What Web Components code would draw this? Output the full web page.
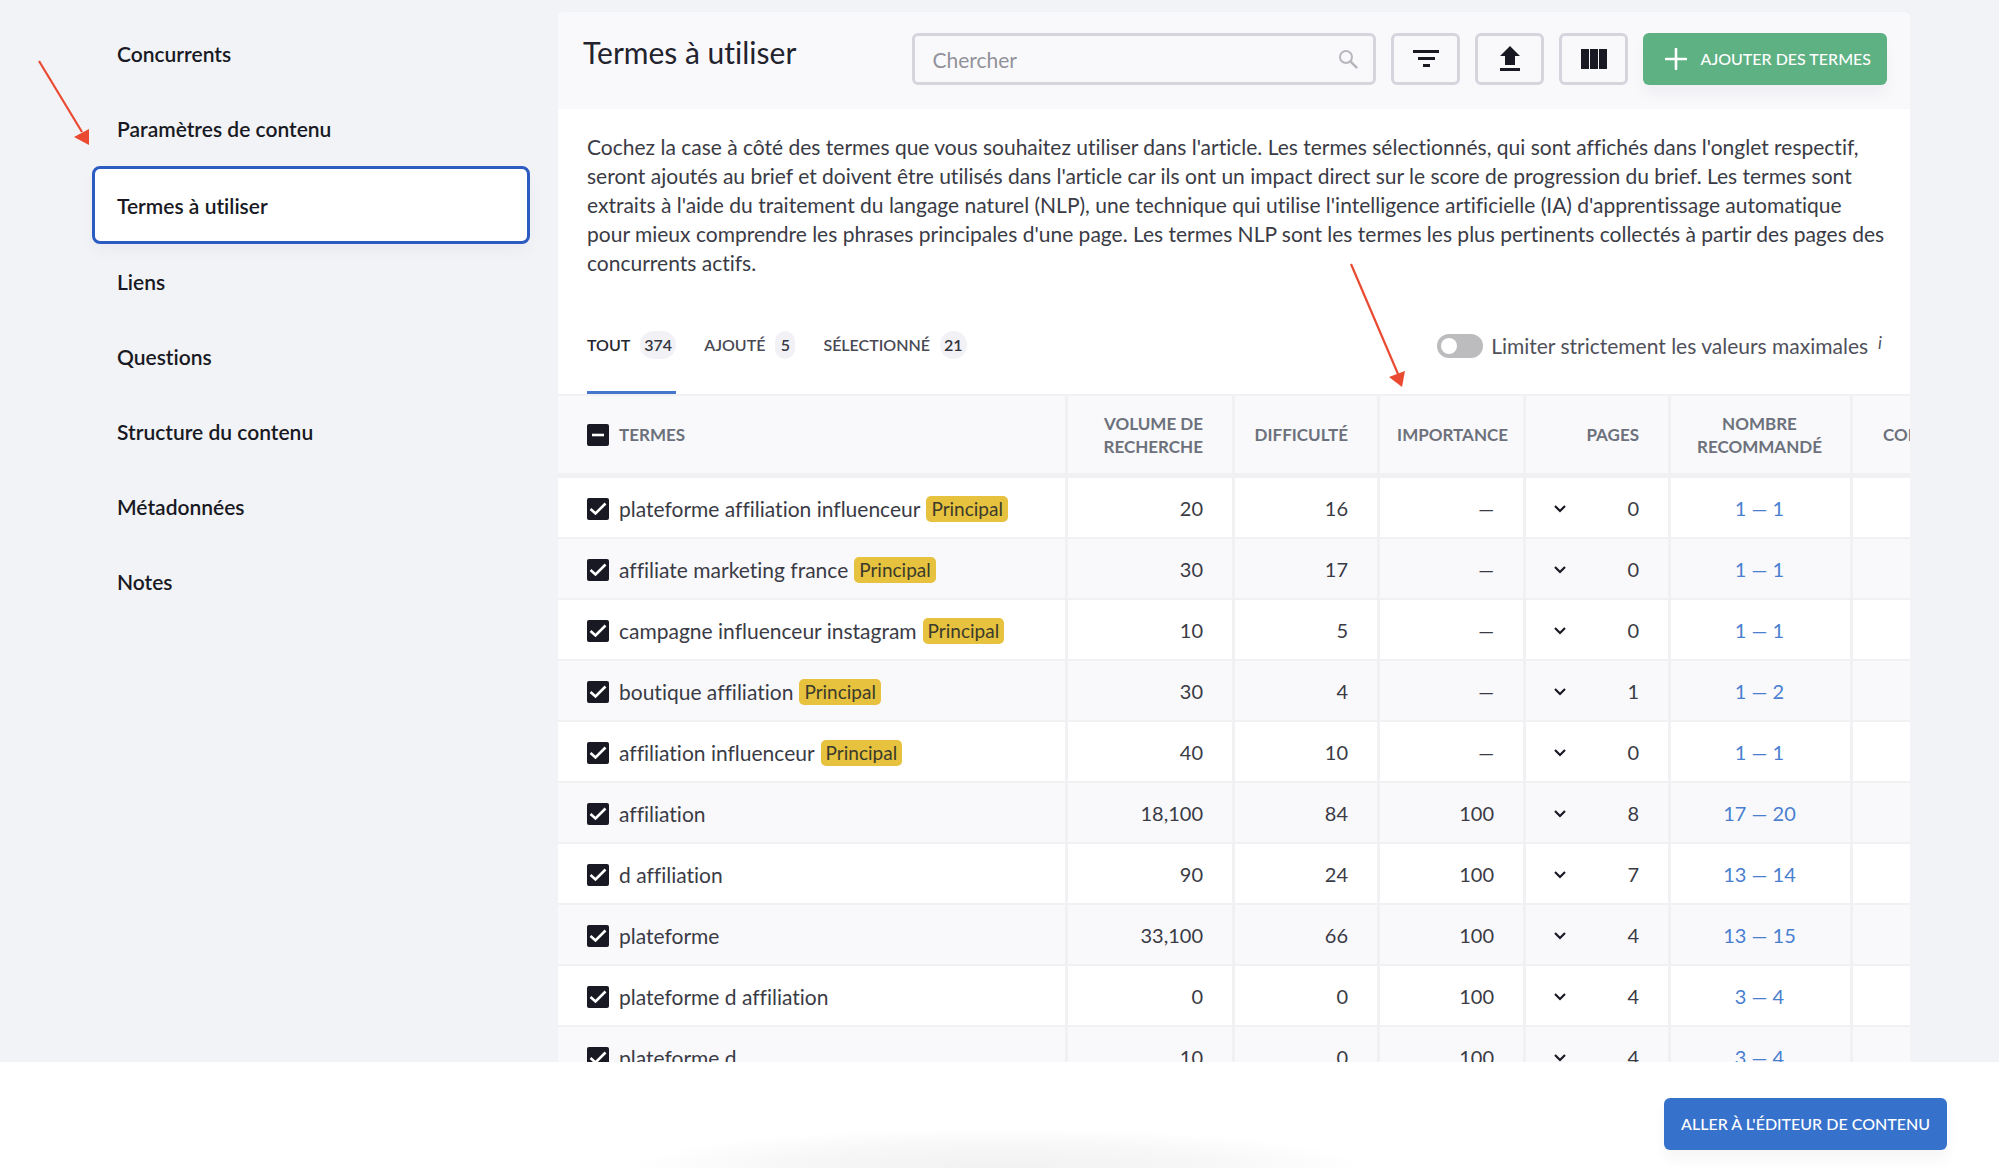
<!DOCTYPE html>
<html lang="fr">
<head>
<meta charset="utf-8">
<meta name="viewport" content="width=device-width, initial-scale=1">
<title>Termes à utiliser</title>
<style>
  html, body { height: 100%; margin: 0; }
  body {
    font: 400 21px/29px Lato, "Noto Sans", sans-serif;
    font-variant-ligatures: none;
    color: #3a3b45;
    background: #f2f3f6;
    overflow: hidden;
    --ink: #181923;
    --line: #f1f1f4;
    --soft: #f9f9fc;
    --edge: #d6d5dd;
    --blue: #3671cc;
  }
</style>
</head>
<body>
<brief-app></brief-app>

<script>
const define = (name, html, setup) => {
  const template = document.createElement('template');
  template.innerHTML = html;
  customElements.define(name, class extends HTMLElement {
    constructor() {
      super();
      this.attachShadow({ mode: 'open' }).append(template.content.cloneNode(true));
    }
    connectedCallback() { if (setup) setup(this, this.shadowRoot); }
  });
};

/* Sidebar entry */
define('nav-item', `
<style>
  :host { display: block; }
  a {
    display: flex; align-items: center; box-sizing: border-box;
    height: 75px; padding: 0 25px;
    color: var(--ink); font-weight: 600; text-decoration: none;
  }
  :host([active]) a {
    height: 78px; padding: 0 22px;
    background: #fff; border: 3px solid #2c5cc2; border-radius: 8px;
    box-shadow: 0 8px 16px rgba(40, 40, 90, .03);
  }
</style>
<a href="#"><slot></slot></a>`,
(host, root) => { if (host.hasAttribute('active')) root.querySelector('a').setAttribute('aria-current', 'page'); });

define('side-nav', `
<style>
  :host { display: block; }
  nav { padding-top: 16px; }
</style>
<nav aria-label="Sections">
  <nav-item>Concurrents</nav-item>
  <nav-item>Paramètres de contenu</nav-item>
  <nav-item active>Termes à utiliser</nav-item>
  <nav-item>Liens</nav-item>
  <nav-item>Questions</nav-item>
  <nav-item>Structure du contenu</nav-item>
  <nav-item>Métadonnées</nav-item>
  <nav-item>Notes</nav-item>
</nav>`);

/* Square outlined tool button */
define('icon-button', `
<style>
  :host { display: block; }
  button {
    display: grid; place-items: center; box-sizing: border-box;
    width: 69px; height: 52px; padding: 0;
    border: 3px solid var(--edge); border-radius: 6px;
    background: var(--soft); color: var(--ink);
  }
</style>
<button type="button"><slot></slot></button>`,
(host, root) => root.querySelector('button').setAttribute('aria-label', host.getAttribute('label')));

/* Filled action button */
define('action-button', `
<style>
  :host { display: block; }
  button {
    display: flex; align-items: center; justify-content: center; gap: 13px; box-sizing: border-box;
    height: 52px; padding: var(--pad, 0 17px);
    border: 0; border-radius: 6px;
    background: var(--fill, var(--blue)); color: #fff;
    font: 500 16px/20px Lato, "Noto Sans", sans-serif; white-space: nowrap;
    box-shadow: 0 10px 14px rgba(30, 30, 60, .04);
  }
</style>
<button type="button"><slot name="icon"></slot><slot></slot></button>`);

define('search-box', `
<style>
  :host { display: block; }
  label {
    display: flex; align-items: center; box-sizing: border-box;
    height: 52px; padding: 0 15px 0 17px;
    border: 3px solid var(--edge); border-radius: 6px; background: var(--soft);
  }
  input {
    flex: 1; min-width: 0; padding: 0; border: 0; outline: 0; background: none;
    font: inherit; color: var(--ink);
  }
  input::placeholder { color: #92929a; opacity: 1; }
</style>
<label>
  <input type="text" placeholder="Chercher" aria-label="Chercher">
  <svg width="20" height="20" viewBox="0 0 20 20" fill="none" stroke="#b7b7bd" stroke-width="2" stroke-linecap="round"><circle cx="8" cy="8" r="6"/><path d="M12.4 12.4l6 6" stroke-width="2.6"/></svg>
</label>`);

define('panel-header', `
<style>
  :host {
    display: flex; justify-content: space-between; align-items: flex-start; gap: 24px;
    padding: 21px 23px 24px 25px; background: var(--soft); border-radius: 6px 6px 0 0;
  }
  h1 { margin: 0; font-size: 30px; line-height: 38px; font-weight: 400; color: #22232d; white-space: nowrap; }
  .tools { display: flex; gap: 15px; }
  search-box { width: 464px; }
  action-button { --fill: #5eb182; --pad: 0 16px 0 22px; }
</style>
<h1>Termes à utiliser</h1>
<div class="tools">
  <search-box></search-box>
  <icon-button label="Filtrer"><svg width="28" height="22" viewBox="0 0 28 22" fill="currentColor"><path d="M1 2h26v3H1zM6 9h17v3H6zM11 16h7v3h-7z"/></svg></icon-button>
  <icon-button label="Exporter"><svg width="22" height="26" viewBox="0 0 22 26" fill="currentColor"><path d="M11 0L21 10h-5v9H6v-9H1zM1 22h20v3H1z"/></svg></icon-button>
  <icon-button label="Colonnes"><svg width="26" height="20" viewBox="0 0 26 20" fill="currentColor"><path d="M0 0h8v20H0zM9 0h8v20H9zM18 0h8v20h-8z"/></svg></icon-button>
  <action-button><svg slot="icon" width="22" height="22" viewBox="0 0 22 22" stroke="#fff" stroke-width="2.6" stroke-linecap="round"><path d="M11 1v20M1 11h20"/></svg>AJOUTER DES TERMES</action-button>
</div>`);

/* Tab with a round counter */
define('count-tab', `
<style>
  :host { display: block; }
  button {
    display: flex; align-items: center; gap: 10px; height: 73px; padding: 0 0 22px;
    border: 0; border-bottom: 3px solid transparent; background: none;
    color: #484954; font: 600 16px/20px Lato, "Noto Sans", sans-serif;
  }
  :host([selected]) button { color: #23242e; border-bottom-color: #4577cc; }
  .count {
    box-sizing: border-box; min-width: 20px; height: 28px; padding: 0 4px;
    border-radius: 14px; background: #f2f2f6; line-height: 28px; text-align: center; color: #34353f;
  }
</style>
<button type="button" role="tab"><slot></slot><span class="count"></span></button>`,
(host, root) => {
  root.querySelector('.count').textContent = host.getAttribute('count');
  root.querySelector('button').setAttribute('aria-selected', host.hasAttribute('selected'));
});

define('limit-switch', `
<style>
  :host { display: block; }
  label { display: flex; align-items: center; gap: 8px; color: #4f505a; white-space: nowrap; }
  input {
    appearance: none; display: flex; align-items: center; box-sizing: border-box;
    width: 46px; height: 24px; margin: 0; padding: 4px; border-radius: 12px; background: #bcbcbe;
  }
  input::before { content: ""; width: 16px; height: 16px; border-radius: 50%; background: #fff; }
  input:checked { justify-content: flex-end; background: var(--blue); }
  i { font-size: 17px; line-height: 23px; align-self: flex-start; padding-left: 2px; }
</style>
<label><input type="checkbox" role="switch">Limiter strictement les valeurs maximales<i>i</i></label>`);

define('tab-bar', `
<style>
  :host { display: flex; justify-content: space-between; align-items: flex-start; padding: 0 28px 0 29px; }
  .tabs { display: flex; gap: 28px; }
  limit-switch { padding-top: 10px; }
</style>
<div class="tabs" role="tablist">
  <count-tab selected count="374">TOUT</count-tab>
  <count-tab count="5">AJOUTÉ</count-tab>
  <count-tab count="21">SÉLECTIONNÉ</count-tab>
</div>
<limit-switch></limit-switch>`);

/* Dark tick box */
define('tick-box', `
<style>
  :host { display: inline-grid; width: 22px; height: 22px; }
  input, svg { grid-area: 1 / 1; }
  input { appearance: none; width: 22px; height: 22px; margin: 0; border-radius: 2px; background: var(--ink); }
  svg { pointer-events: none; }
  .dash { display: none; }
  :host([mixed]) .dash { display: inline; }
  :host([mixed]) .tick { display: none; }
</style>
<input type="checkbox" checked>
<svg width="22" height="22" viewBox="0 0 22 22" fill="none" stroke="#fff" stroke-width="2.6"><path class="tick" d="M3.5 11L8.5 15.5L18.5 5.5"/><path class="dash" d="M5 11h12"/></svg>`,
(host, root) => {
  const box = root.querySelector('input');
  box.indeterminate = host.hasAttribute('mixed');
  box.setAttribute('aria-label', host.getAttribute('label'));
});

const TERMS = [
  ['plateforme affiliation influenceur', true, '20', '16', '—', '0', '1 — 1'],
  ['affiliate marketing france', true, '30', '17', '—', '0', '1 — 1'],
  ['campagne influenceur instagram', true, '10', '5', '—', '0', '1 — 1'],
  ['boutique affiliation', true, '30', '4', '—', '1', '1 — 2'],
  ['affiliation influenceur', true, '40', '10', '—', '0', '1 — 1'],
  ['affiliation', false, '18,100', '84', '100', '8', '17 — 20'],
  ['d affiliation', false, '90', '24', '100', '7', '13 — 14'],
  ['plateforme', false, '33,100', '66', '100', '4', '13 — 15'],
  ['plateforme d affiliation', false, '0', '0', '100', '4', '3 — 4'],
  ['plateforme d', false, '10', '0', '100', '4', '3 — 4'],
];

define('terms-table', `
<style>
  :host { display: block; overflow: hidden; }
  table { width: 100%; min-width: 1530px; table-layout: fixed; border-collapse: separate; border-spacing: 0; }
  th, td { box-sizing: border-box; padding: 0 29px 0 28px; border-right: 3px solid var(--line); text-align: right; }
  th {
    height: 84px; padding-left: 15px; background: var(--soft); border-top: 2px solid var(--line); border-bottom: 5px solid var(--line);
    color: #6c717b; font-size: 17px; line-height: 23px; font-weight: 700;
  }
  td { height: 61px; padding-top: 2px; border-bottom: 2px solid var(--line); background: #fff; font-size: 20px; }
  tr:nth-child(even) td { background: var(--soft); }
  th:first-child, td:first-child { text-align: left; padding-left: 29px; }
  th:nth-child(4) { padding: 0 15px; }
  th:nth-child(6), td:nth-child(6) { text-align: center; padding-left: 20px; padding-right: 22px; }
  th:last-child { text-align: left; padding-left: 30px; }
  .term { display: flex; align-items: center; gap: 10px; font-size: 21px; }
  th .term { font-size: 17px; }
  .main { margin-left: -4px; padding: 0 5px; border-radius: 5px; background: #e6c23e; color: #3b3a2c; font-size: 19px; line-height: 26px; }
  .pages { display: flex; align-items: center; justify-content: space-between; }
  button { padding: 0; border: 0; background: none; font: inherit; color: inherit; }
  .pages button { display: grid; color: var(--ink); }
  a { color: #4a7fd0; text-decoration: none; }
</style>
<table>
  <colgroup><col style="width:510px"><col style="width:167px"><col style="width:145px"><col style="width:146px"><col style="width:145px"><col style="width:182px"><col></colgroup>
  <thead><tr>
    <th><div class="term"><tick-box mixed label="Tout sélectionner"></tick-box>TERMES</div></th>
    <th>VOLUME DE RECHERCHE</th><th>DIFFICULTÉ</th><th>IMPORTANCE</th><th>PAGES</th><th>NOMBRE RECOMMANDÉ</th><th>COMPÉTITION</th>
  </tr></thead>
  <tbody></tbody>
</table>`,
(host, root) => {
  root.querySelector('tbody').innerHTML = TERMS.map(([term, main, volume, difficulty, importance, pages, range]) => `
    <tr>
      <td><div class="term"><tick-box label="${term}"></tick-box>${term}${main ? '<span class="main">Principal</span>' : ''}</div></td>
      <td>${volume}</td><td>${difficulty}</td><td>${importance}</td>
      <td><div class="pages"><button type="button" aria-label="Afficher les pages"><svg width="12" height="10" viewBox="0 0 12 10" fill="none" stroke="currentColor" stroke-width="2.2"><path d="M1 2l5 5 5-5"/></svg></button>${pages}</div></td>
      <td><a href="#">${range}</a></td><td></td>
    </tr>`).join('');
});

define('terms-panel', `
<style>
  :host { display: block; min-width: 0; background: #fff; border-radius: 6px 6px 0 0; }
  p { margin: 0; padding: 23px 22px 0 29px; }
  tab-bar { padding-top: 44px; }
</style>
<panel-header></panel-header>
<p>Cochez la case à côté des termes que vous souhaitez utiliser dans l'article. Les termes sélectionnés, qui sont affichés dans l'onglet respectif, seront ajoutés au brief et doivent être utilisés dans l'article car ils ont un impact direct sur le score de progression du brief. Les termes sont extraits à l'aide du traitement du langage naturel (NLP), une technique qui utilise l'intelligence artificielle (IA) d'apprentissage automatique pour mieux comprendre les phrases principales d'une page. Les termes NLP sont les termes les plus pertinents collectés à partir des pages des concurrents actifs.</p>
<tab-bar></tab-bar>
<terms-table></terms-table>`);

define('page-footer', `
<style>
  :host {
    display: flex; justify-content: flex-end; align-items: flex-start; box-sizing: border-box;
    height: 106px; padding: 36px 52px 0;
    background: radial-gradient(ellipse 370px 40px at 50% 100%, rgba(60, 60, 70, .07), rgba(60, 60, 70, .04) 60%, transparent) no-repeat #fff;
  }
</style>
<action-button>ALLER À L'ÉDITEUR DE CONTENU</action-button>`);

/* Red annotation arrows drawn over the page */
define('note-arrows', `
<style>
  :host { position: absolute; top: 0; left: 0; pointer-events: none; }
  svg { display: block; }
</style>
<svg width="1450" height="400" viewBox="0 0 1450 400" fill="#ea4a31" stroke="#ea4a31" aria-hidden="true">
  <path d="M39 61L82 132" stroke-width="2.2"/><path d="M89 145L74 137L89 129Z" stroke="none"/>
  <path d="M1351 264L1398 374" stroke-width="2.2"/><path d="M1402 387L1389 377L1405 371Z" stroke="none"/>
</svg>`);

define('brief-app', `
<style>
  :host { display: flex; flex-direction: column; height: 100vh; }
  main {
    flex: 1; min-height: 0; overflow: hidden;
    display: grid; grid-template-columns: 438px minmax(0, 1fr); gap: 28px; padding: 0 89px 0 92px;
  }
  terms-panel { margin-top: 12px; }
</style>
<main><side-nav></side-nav><terms-panel></terms-panel></main>
<page-footer></page-footer>
<note-arrows></note-arrows>`);
</script>
</body>
</html>
